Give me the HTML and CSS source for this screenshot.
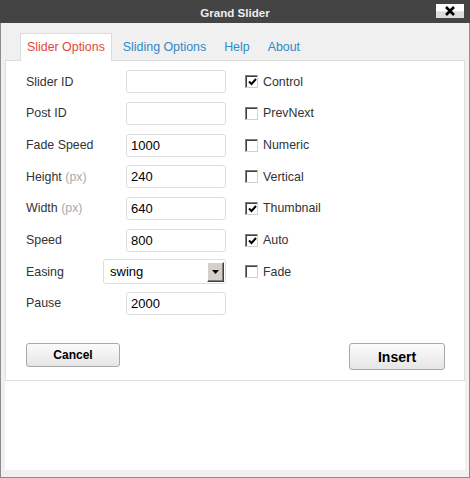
FILE: index.html
```html
<!DOCTYPE html>
<html>
<head>
<meta charset="utf-8">
<link rel="stylesheet" href="styles.css">
</head>
<body>
<div class="window">
  <div class="titlebar">
    <span class="title">Grand Slider</span>
    <span class="close"><svg width="12" height="10" viewBox="0 0 12 10"><path d="M2 1 L10 9 M10 1 L2 9" stroke="#000" stroke-width="2.6"/></svg></span>
  </div>
  <div class="body">
    <div class="tabs">
      <span class="tab active">Slider Options</span>
      <span class="tab">Sliding Options</span>
      <span class="tab">Help</span>
      <span class="tab">About</span>
    </div>
    <div class="content">
      <div class="panel">
        <div class="form">
          <label class="lbl">Slider ID</label>
          <span class="input"></span>
          <span class="check on"><i class="box"><svg width="9" height="8" viewBox="0 0 9 8"><path d="M1 3.5 L3.5 6 L8 1" fill="none" stroke="#000" stroke-width="2"/></svg></i>Control</span>

          <label class="lbl">Post ID</label>
          <span class="input"></span>
          <span class="check"><i class="box"></i>PrevNext</span>

          <label class="lbl">Fade Speed</label>
          <span class="input">1000</span>
          <span class="check"><i class="box"></i>Numeric</span>

          <label class="lbl">Height <em>(px)</em></label>
          <span class="input">240</span>
          <span class="check"><i class="box"></i>Vertical</span>

          <label class="lbl">Width <em>(px)</em></label>
          <span class="input">640</span>
          <span class="check on"><i class="box"><svg width="9" height="8" viewBox="0 0 9 8"><path d="M1 3.5 L3.5 6 L8 1" fill="none" stroke="#000" stroke-width="2"/></svg></i>Thumbnail</span>

          <label class="lbl">Speed</label>
          <span class="input">800</span>
          <span class="check on"><i class="box"><svg width="9" height="8" viewBox="0 0 9 8"><path d="M1 3.5 L3.5 6 L8 1" fill="none" stroke="#000" stroke-width="2"/></svg></i>Auto</span>

          <label class="lbl">Easing</label>
          <span class="select">swing<i class="arrow"><svg width="7" height="4" viewBox="0 0 7 4"><path d="M0 0 H7 L3.5 4 Z" fill="#000"/></svg></i></span>
          <span class="check"><i class="box"></i>Fade</span>

          <label class="lbl">Pause</label>
          <span class="input">2000</span>
          <span></span>
        </div>
        <div class="actions">
          <button class="btn cancel">Cancel</button>
          <button class="btn insert">Insert</button>
        </div>
      </div>
    </div>
  </div>
</div>
</body>
</html>
```
FILE: styles.css
```css
* { box-sizing: border-box; }
html, body { margin: 0; padding: 0; }
body { font-family: "Liberation Sans", Arial, sans-serif; font-size: 12.4px; color: #333; }

.window {
  width: 470px; height: 478px;
  border: 1px solid #8c8c8c;
  border-top: none;
  display: flex; flex-direction: column;
  background: #f0f0f0;
}
.titlebar {
  height: 23px; background: #444; color: #eee;
  display: flex; align-items: center; justify-content: center;
  position: relative;
  margin: 0 -1px;
}
.title { font-weight: bold; font-size: 11.6px; margin-top: 1px; }
.close {
  position: absolute; right: 6px; top: 4px;
  width: 28px; height: 14px;
  background: linear-gradient(#fff 0, #fff 50%, #dcdcdc 55%, #dcdcdc 100%);
  display: flex; align-items: center; justify-content: center;
}
.body { flex: 1; padding: 0 4px 7px; display: flex; flex-direction: column; }
.tabs { height: 37px; padding: 10px 0 0 15px; display: flex; gap: 4px; align-items: stretch; }
.tab {
  padding: 0 6px; color: #2d8ac7;
  border: 1px solid transparent; border-bottom: none;
  height: 27px; line-height: 27px;
}
.tab.active { background: #fff; border-color: #ddd; color: #e4473c; height: 28px; position: relative; z-index: 1; }

.content { flex: 1; background: #fff; }
.panel { height: 321px; border: 1px solid #ddd; padding: 5px 19px 0 20px; display: flex; flex-direction: column; }

.form {
  display: grid;
  grid-template-columns: 77px 123px 1fr;
  grid-auto-rows: 31.65px;
  align-items: center;
}
.lbl { color: #333; }
.lbl em { font-style: normal; color: #aaa; }
.input {
  justify-self: end; width: 100px; height: 23px;
  border: 1px solid #ddd; border-radius: 3px;
  padding: 0 4px; line-height: 22px; color: #000; font-size: 13px;
}
.select {
  width: 123px; height: 25px; border: 1px solid #ddd; border-radius: 3px;
  padding: 0 1px 0 6px; color: #000; font-size: 13px;
  display: flex; justify-content: space-between; align-items: center;
}
.arrow {
  width: 17px; height: 20px; background: #d4d0c8;
  border: 1px solid; border-color: #fff #404040 #404040 #fff;
  box-shadow: inset -1px -1px 0 #808080;
  display: flex; align-items: center; justify-content: center;
}
.check { display: flex; align-items: center; gap: 5px; color: #333; padding-left: 19px; }
.box {
  width: 13px; height: 13px;
  border: 1px solid; border-color: #808080 #d4d0c8 #d4d0c8 #808080;
  box-shadow: inset 1px 1px 0 #404040;
  background: #fff;
  display: flex; align-items: center; justify-content: center;
  padding: 1px 0 0 1px;
}
.actions { display: flex; justify-content: space-between; align-items: flex-start; margin-top: 24px; }
.btn {
  font-family: "Liberation Sans", Arial, sans-serif; font-weight: bold; color: #000;
  border: 1px solid #a8a8a8; border-radius: 3px;
  background: linear-gradient(#fbfbfb, #e6e6e6);
  padding: 0;
}
.cancel { width: 94px; height: 24px; font-size: 12px; }
.insert { width: 96px; height: 27px; font-size: 14px; }
```
